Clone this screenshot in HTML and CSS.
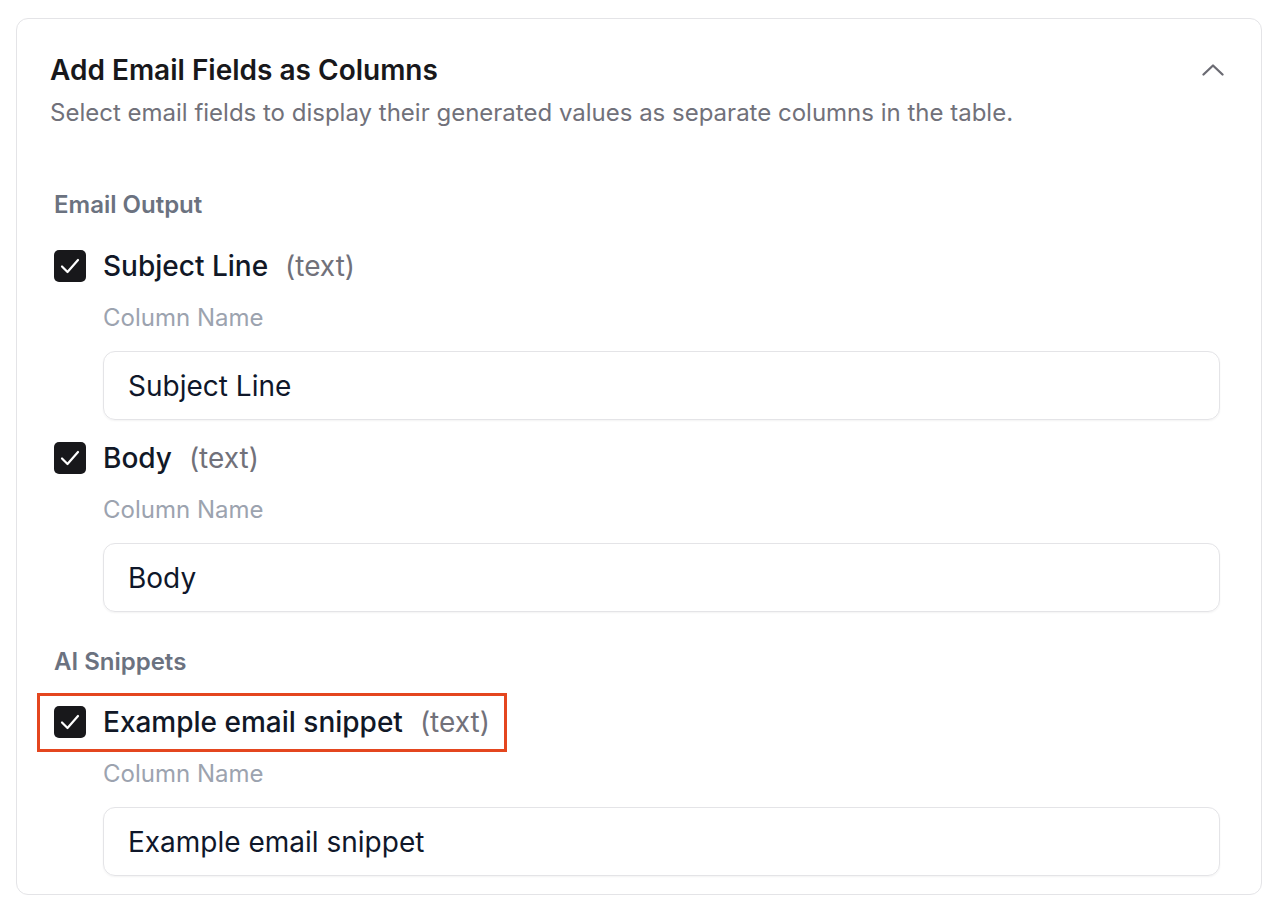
FILE: index.html
```html
<!DOCTYPE html>
<html lang="en">
<head>
<meta charset="utf-8">
<title>Add Email Fields as Columns</title>
<link rel="stylesheet" href="styles.css">
</head>
<body>
<section class="card">
  <header class="card-head">
    <h2 class="title">Add Email Fields as Columns</h2>
    <button class="collapse" aria-label="Collapse">
      <svg width="22" height="14" viewBox="0 0 22 14" fill="none"><path d="M1.5 11.5 L11 2.5 L20.5 11.5" stroke="#6b6b73" stroke-width="2.3" stroke-linecap="round" stroke-linejoin="round"/></svg>
    </button>
  </header>
  <p class="subtitle">Select email fields to display their generated values as separate columns in the table.</p>

  <div class="group">
    <div class="group-label">Email Output</div>

    <div class="field">
      <label class="check-row">
        <span class="box"><svg width="24" height="24" viewBox="0 0 24 24" fill="none"><path d="M4 12.5 L9.5 18 L20 6" stroke="#fff" stroke-width="2.2" stroke-linecap="round" stroke-linejoin="round"/></svg></span>
        <span class="name">Subject Line</span><span class="type">(text)</span>
      </label>
      <div class="col-label">Column Name</div>
      <div class="input">Subject Line</div>
    </div>

    <div class="field">
      <label class="check-row">
        <span class="box"><svg width="24" height="24" viewBox="0 0 24 24" fill="none"><path d="M4 12.5 L9.5 18 L20 6" stroke="#fff" stroke-width="2.2" stroke-linecap="round" stroke-linejoin="round"/></svg></span>
        <span class="name">Body</span><span class="type">(text)</span>
      </label>
      <div class="col-label">Column Name</div>
      <div class="input">Body</div>
    </div>
  </div>

  <div class="group">
    <div class="group-label">AI Snippets</div>

    <div class="field">
      <label class="check-row highlight">
        <span class="box"><svg width="24" height="24" viewBox="0 0 24 24" fill="none"><path d="M4 12.5 L9.5 18 L20 6" stroke="#fff" stroke-width="2.2" stroke-linecap="round" stroke-linejoin="round"/></svg></span>
        <span class="name">Example email snippet</span><span class="type">(text)</span>
      </label>
      <div class="col-label">Column Name</div>
      <div class="input">Example email snippet</div>
    </div>
  </div>
</section>
</body>
</html>
```

FILE: styles.css
```css
* { box-sizing: border-box; }

html, body {
  margin: 0;
  background: #ffffff;
}

body {
  font-family: Inter, "Noto Sans", "Liberation Sans", sans-serif;
  color: #18181b;
}

.card {
  margin: 18px 18px 16px 16px;
  border: 1.5px solid #e4e4e7;
  border-radius: 12px;
  padding: 35px 41px 18px 33px;
}

.card-head {
  display: flex;
  align-items: center;
  justify-content: space-between;
}

.title {
  margin: 0;
  font-size: 28px;
  line-height: 32px;
  font-weight: 600;
  color: #18181b;
}

.collapse {
  border: 0;
  background: none;
  padding: 0;
  margin-right: -4px;
  display: flex;
}

.subtitle {
  margin: 11px 0 0;
  font-size: 24px;
  line-height: 32px;
  color: #71717a;
}

.group {
  padding-left: 4px;
}

.group-label {
  margin-top: 62px;
  margin-bottom: 31px;
  font-size: 24px;
  line-height: 28px;
  font-weight: 600;
  color: #6b7280;
}

.group + .group .group-label {
  margin-top: 36px;
  margin-bottom: 30px;
}

.field {
  display: flex;
  flex-direction: column;
}

.field + .field {
  margin-top: 22px;
}

.check-row {
  position: relative;
  align-self: flex-start;
  display: flex;
  align-items: center;
  height: 32px;
}

.box {
  width: 32px;
  height: 32px;
  border-radius: 5px;
  background: #18181b;
  display: flex;
  align-items: center;
  justify-content: center;
  margin-right: 17px;
}

.name {
  font-size: 28px;
  font-weight: 500;
  color: #111827;
}

.type {
  font-size: 28px;
  color: #71717a;
  margin-left: 17px;
}

.highlight::after {
  content: "";
  position: absolute;
  top: -13px;
  bottom: -14px;
  left: -17px;
  right: -17px;
  border: 3px solid #e4461f;
  pointer-events: none;
}

.col-label {
  margin: 22px 0 0 49px;
  font-size: 24px;
  line-height: 28px;
  color: #9ca3af;
}

.input {
  margin: 19px 0 0 49px;
  height: 69px;
  border: 1.5px solid #e4e4e7;
  border-radius: 12px;
  padding: 0 24px;
  display: flex;
  align-items: center;
  font-size: 28px;
  color: #0f172a;
  box-shadow: 0 1px 2px rgba(0, 0, 0, 0.05);
}
```
